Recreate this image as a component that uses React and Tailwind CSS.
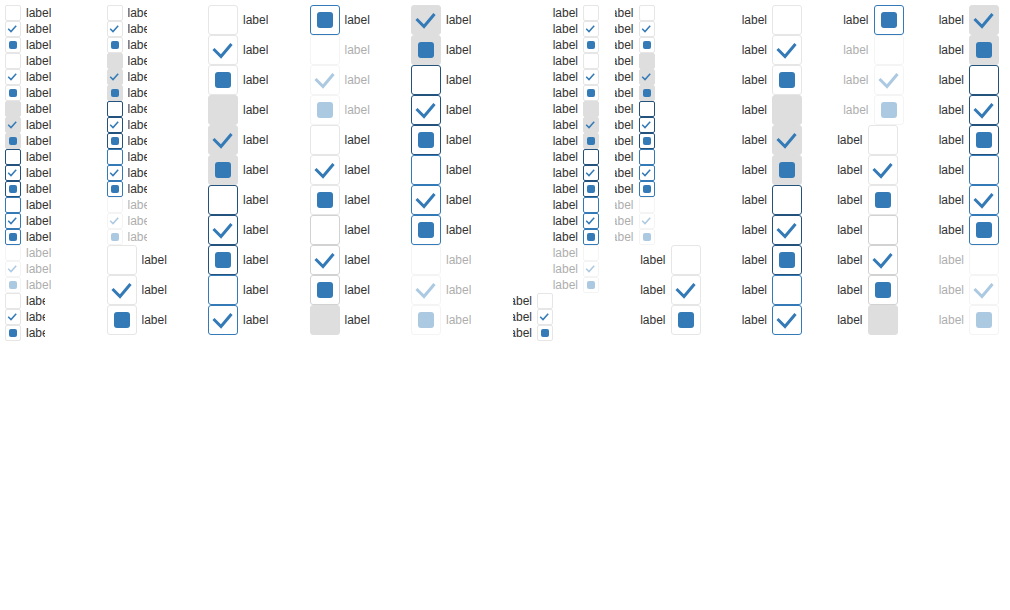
import React from 'react';
import clsx from 'clsx';

// 6 visual states x 3 values, repeated for each variant group
const STATES = ['normal', 'hover', 'gray', 'dark', 'blue', 'disabled'];
const VALUES = ['unchecked', 'checked', 'mixed'];

const GROUPS = [
  { size: 'sm', width: 'w-[86px]', darkHover: false },
  { size: 'sm', width: 'w-[40px]', darkHover: false },
  { size: 'lg', width: 'w-[86px]', darkHover: false },
  { size: 'lg', width: 'w-[80px]', darkHover: true },
];

const items = GROUPS.flatMap((g, gi) =>
  STATES.flatMap((state) =>
    VALUES.map((value) => ({ ...g, state, value, key: `${gi}-${state}-${value}` }))
  )
);

const boxTone = (state, darkHover) => {
  switch (state) {
    case 'hover':
      return darkHover ? 'bg-white border-[#d2d2d2]' : 'bg-white border-[#e6e6e6]';
    case 'gray':
      return 'bg-[#dedede] border-[#dedede]';
    case 'dark':
      return 'bg-white border-[#23527c]';
    case 'blue':
      return 'bg-white border-[#337ab7]';
    default:
      return 'bg-white border-[#e6e6e6]';
  }
};

const Box = ({ size, state, value, darkHover }) => {
  const lg = size === 'lg';
  return (
    <div
      className={clsx(
        'flex shrink-0 items-center justify-center border',
        lg ? 'h-[30px] w-[30px] rounded-[3px]' : 'h-4 w-4 rounded-[2px]',
        boxTone(state, darkHover)
      )}
    >
      {value === 'checked' &&
        (lg ? (
          <svg width="28" height="28" viewBox="0 0 28 28" fill="none">
            <polyline points="4.5,13 12,20.5 22.5,8" stroke="#337ab7" strokeWidth="3" />
          </svg>
        ) : (
          <svg width="14" height="14" viewBox="0 0 14 14" fill="none">
            <polyline points="2.2,6.8 5,9.6 10.2,3.8" stroke="#337ab7" strokeWidth="1.5" />
          </svg>
        ))}
      {value === 'mixed' && (
        <span className={clsx('bg-[#337ab7]', lg ? 'h-4 w-4 rounded-[3px]' : 'h-2 w-2 rounded-[2px]')} />
      )}
    </div>
  );
};

const Item = ({ item, rtl }) => (
  <div
    dir={rtl ? 'rtl' : 'ltr'}
    className={clsx(
      'flex items-center gap-[5px]',
      item.size === 'lg' ? 'h-[30px]' : 'h-4',
      item.width,
      item.state === 'disabled' && 'opacity-40'
    )}
  >
    <Box size={item.size} state={item.state} value={item.value} darkHover={item.darkHover} />
    <span className="min-w-0 overflow-hidden whitespace-nowrap text-[12px] text-[#333]">label</span>
  </div>
);

const Panel = ({ rtl, className }) => (
  <div className={clsx('p-[5px]', className)}>
    <div className="flex h-[340px] flex-col flex-wrap content-start items-start gap-x-[15.5px]">
      {items.map((it) => (
        <Item key={it.key} item={it} rtl={rtl} />
      ))}
    </div>
  </div>
);

export default function App() {
  return (
    <div className="flex h-[610px] w-[1010px] bg-white" style={{ fontFamily: '"Liberation Sans", Arial, sans-serif' }}>
      <Panel className="w-[508px]" />
      <Panel rtl className="w-[502px]" />
    </div>
  );
}
